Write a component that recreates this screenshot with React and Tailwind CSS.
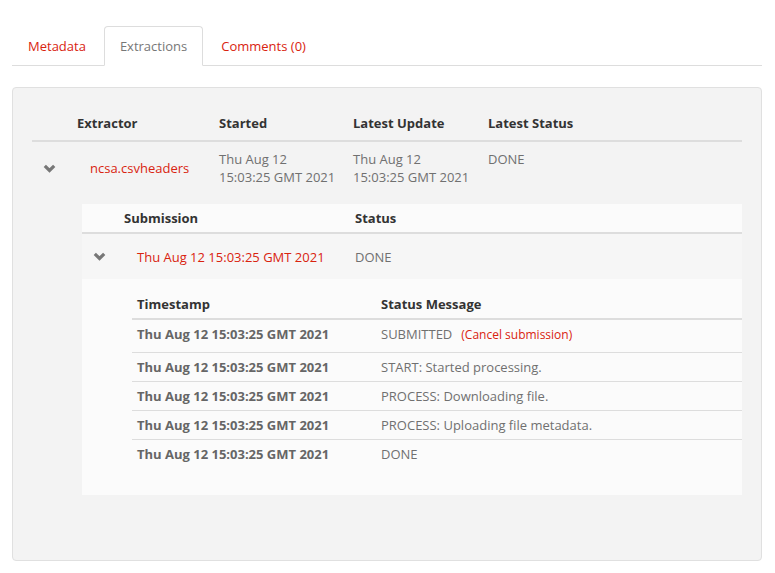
import React from 'react';

const stamp = 'Thu Aug 12 15:03:25 GMT 2021';

const events = [
  { msg: 'SUBMITTED', cancel: true },
  { msg: 'START: Started processing.' },
  { msg: 'PROCESS: Downloading file.' },
  { msg: 'PROCESS: Uploading file metadata.' },
  { msg: 'DONE' },
];

function Chevron() {
  return (
    <svg width="13" height="9" viewBox="0 0 13 9" className="block">
      <polyline points="1.8,1.8 6.5,6.5 11.2,1.8" fill="none" stroke="#777" strokeWidth="3.2" strokeLinecap="butt" strokeLinejoin="miter" />
    </svg>
  );
}

function Tab({ active, children }) {
  return (
    <div
      className={`mr-[2px] -mb-px px-[15px] py-[10px] border rounded-t-[4px] ${
        active ? 'border-[#ddd] border-b-white bg-white text-[#777]' : 'border-transparent text-[#d9230f]'
      }`}
    >
      {children}
    </div>
  );
}

export default function App() {
  return (
    <div className="min-h-screen bg-white px-3 pt-[26px] font-['Open_Sans',sans-serif] text-[13px] leading-[18px] text-[#707070]">
      <div className="w-[750px]">
        {/* Tabs */}
        <div className="flex border-b border-[#ddd]">
          <Tab>Metadata</Tab>
          <Tab active>Extractions</Tab>
          <Tab>Comments (0)</Tab>
        </div>

        {/* Panel */}
        <div className="mt-[21px] rounded-[4px] border border-[#e0e0e0] bg-[#f3f3f3] px-[19px] pt-[18px] pb-[65px]">
          <div className="grid grid-cols-[37px_142px_134px_135px_1fr] border-b-2 border-[#ddd] font-bold text-[#333]">
            <div />
            <div className="p-[8px]">Extractor</div>
            <div className="p-[8px]">Started</div>
            <div className="p-[8px]">Latest Update</div>
            <div className="p-[8px]">Latest Status</div>
          </div>
          <div className="grid grid-cols-[37px_142px_134px_135px_1fr]">
            <div className="flex items-center pl-[11px]">
              <Chevron />
            </div>
            <div className="flex items-center p-[8px] pl-[21px] text-[#d9230f]">ncsa.csvheaders</div>
            <div className="p-[8px]">
              Thu Aug 12
              <br />
              15:03:25 GMT 2021
            </div>
            <div className="p-[8px]">
              Thu Aug 12
              <br />
              15:03:25 GMT 2021
            </div>
            <div className="p-[8px]">DONE</div>
          </div>

          {/* Submissions */}
          <div className="ml-[50px] mt-[10px] bg-[#fbfbfb] pb-[27px]">
            <div className="grid grid-cols-[34px_231px_1fr] border-b-2 border-[#ddd] font-bold text-[#333]">
              <div />
              <div className="px-[8px] py-[5px]">Submission</div>
              <div className="px-[8px] py-[5px]">Status</div>
            </div>
            <div className="grid grid-cols-[34px_231px_1fr] bg-[#f6f6f6]">
              <div className="flex items-center pl-[11px]">
                <Chevron />
              </div>
              <div className="px-[8px] pt-[14px] pb-[13px] pl-[21px] text-[#d9230f]">{stamp}</div>
              <div className="px-[8px] pt-[14px] pb-[13px]">DONE</div>
            </div>

            {/* Events */}
            <div className="ml-[50px] mt-[11px]">
              <div className="grid grid-cols-[244px_1fr] border-b-2 border-[#ddd] font-bold text-[#333]">
                <div className="px-[5px] py-[5px]">Timestamp</div>
                <div className="px-[5px] py-[5px]">Status Message</div>
              </div>
              {events.map((e, i) => (
                <div
                  key={i}
                  className={`grid grid-cols-[244px_1fr] ${e.cancel ? 'h-[33px]' : ''} ${
                    i < events.length - 1 ? 'border-b border-[#ddd]' : ''
                  }`}
                >
                  <div className="px-[5px] py-[5px] font-bold text-[#666]">{stamp}</div>
                  <div className="px-[5px] py-[5px]">
                    {e.msg}
                    {e.cancel && <span className="ml-[9px] text-[12px] text-[#d9230f]">(Cancel submission)</span>}
                  </div>
                </div>
              ))}
            </div>
          </div>
        </div>
      </div>
    </div>
  );
}
